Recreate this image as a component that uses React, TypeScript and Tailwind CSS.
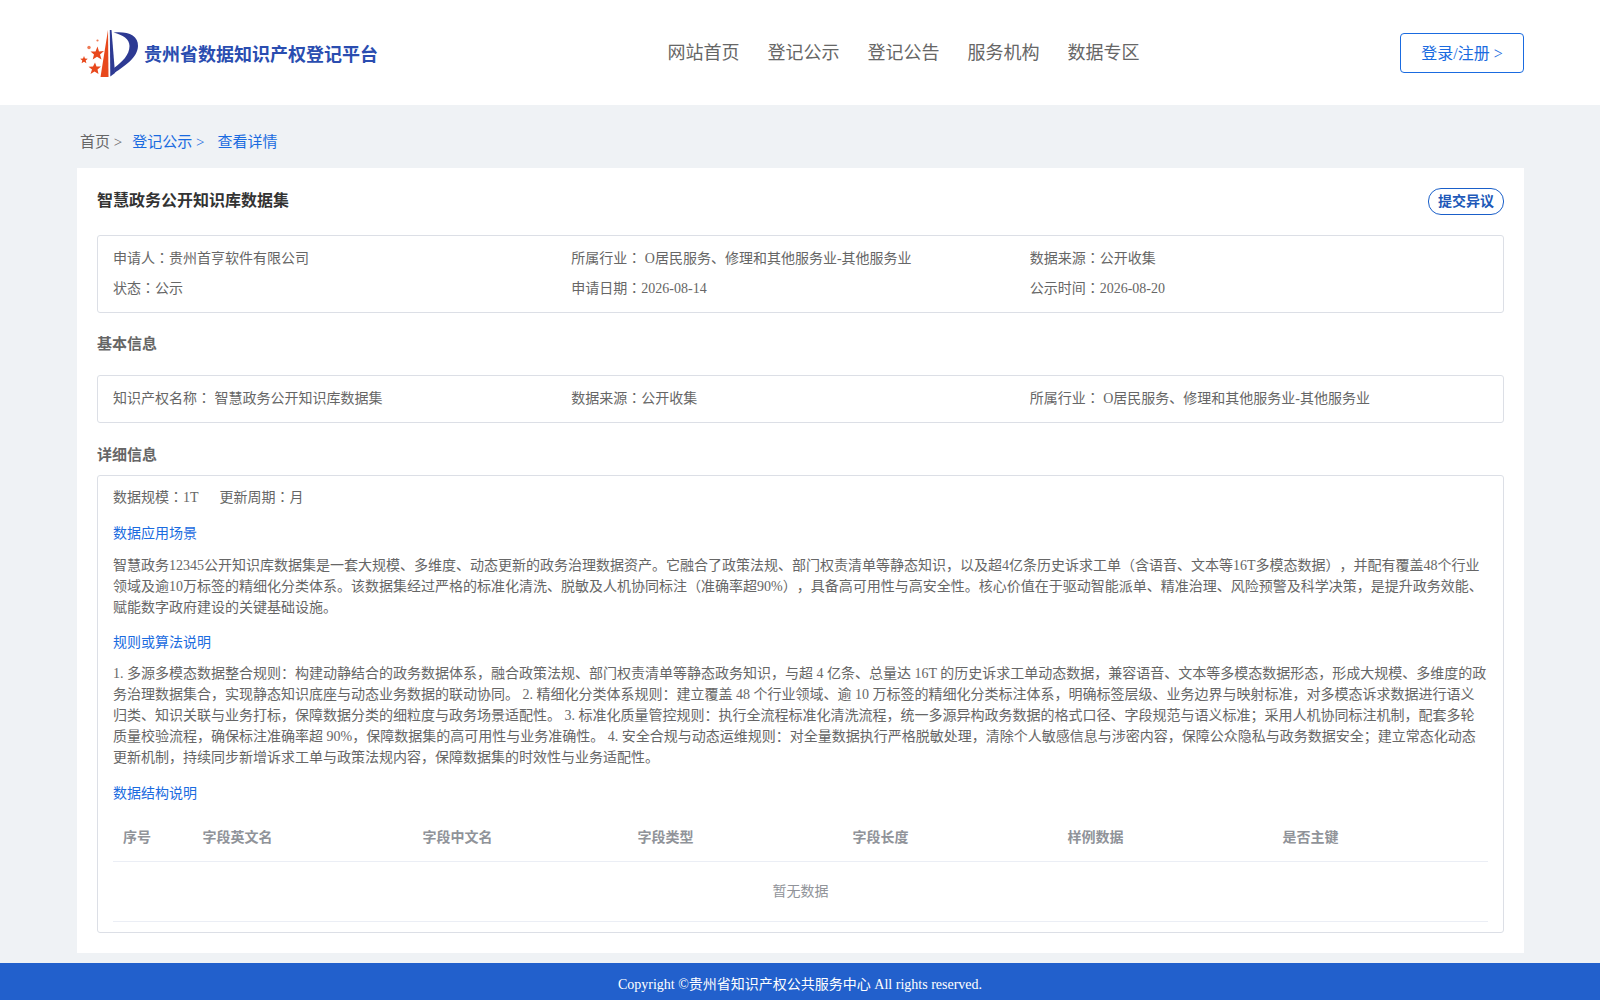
const F = "[font-family:'Liberation_Serif','Noto_Sans_CJK_SC',serif]";

function Logo() {
  return (
    <svg width="60" height="54" viewBox="0 0 60 54" className="shrink-0">
      <path d="M20.500 50 L28 3 L28.500 50 Z" fill="#e8481c" />
      <path d="M29.800 3 L31.500 3 L35 46 L30.300 49.500 Z" fill="#2d3a93" />
      <path d="M33.500 5.500 C47 4 58.500 8 58 19 C57.500 31 45 38.500 34.500 46 L34 41 C42 35 49.500 28 49.500 19 C49.500 12 43 8 33.500 5.500 Z" fill="#2d3a93" />
      <polygon points="17.500,19.500 19,24.500 24,24 20,27.500 21.500,32.500 17,29.800 12.700,32.500 14,27.500 10.500,24.500 15.500,24.500" fill="#e8481c" />
      <polygon points="15,35.500 16.500,39.500 21,39.500 17.500,42.500 18.500,47 14.500,44.500 10.500,47 12,42.500 8.500,39.800 13,39.500" fill="#e8481c" />
      <polygon points="4,29 5,31.500 7.800,31.800 5.700,33.500 6.400,36.300 4,34.800 1.600,36.300 2.300,33.500 0.200,31.800 3,31.500" fill="#e8481c" />
      <circle cx="9" cy="20.500" r="1.700" fill="#ee7a55" />
      <circle cx="17.500" cy="13.500" r="1.100" fill="#ee7a55" />
    </svg>
  );
}

// The colon sits centred in the reference, as in the TC cut of the font.
function T({ children }: { children: string }) {
  return (
    <>
      {children.split(/(：)/).map((part, i) =>
        i % 2 === 1 ? (
          <span key={i} className="leading-[0px] [font-family:'Noto_Sans_CJK_TC',serif]">{part}</span>
        ) : (
          part
        ),
      )}
    </>
  );
}

function Info({ children }: { children: string }) {
  return (
    <div className="flex-1 truncate">
      <T>{children}</T>
    </div>
  );
}

export default function App() {
  const cols = [
    ["序号", "w-[79.500px]"],
    ["字段英文名", "w-[220px]"],
    ["字段中文名", "w-[215px]"],
    ["字段类型", "w-[215px]"],
    ["字段长度", "w-[215px]"],
    ["样例数据", "w-[215px]"],
    ["是否主键", "flex-1"],
  ];
  return (
    <div className={`${F} min-h-[1000px] bg-[#eff2f5] text-[14px] leading-[21px] text-[#666] [text-spacing-trim:space-all]`}>
      <header className="flex h-[105px] items-center justify-between bg-white pl-[80px] pr-[76px]">
        <div className="flex w-[400px] items-center gap-[4px] pt-[3px]">
          <Logo />
          <span className="pt-[2px] text-[18px] font-bold text-[#2a4db0]">贵州省数据知识产权登记平台</span>
        </div>
        <nav className="ml-[-73px] flex gap-[28px] pt-[1px] text-[18px] text-[#666]">
          <span>网站首页</span>
          <span>登记公示</span>
          <span>登记公告</span>
          <span>服务机构</span>
          <span>数据专区</span>
        </nav>
        <button className="h-[40px] w-[124px] rounded-[4px] border border-[#1a6be0] pt-[2px] text-[16px] text-[#1a6be0]">
          登录/注册 &gt;
        </button>
      </header>

      <main className="pl-[77px] pr-[76px]">
        <div className="flex h-[63px] items-center pl-[3px] pt-[11px] text-[15px]">
          <span className="mr-[10px]">首页 &gt;</span>
          <span className="mr-[13px] text-[#1a6be0]">登记公示 &gt;</span>
          <span className="text-[#1a6be0]">查看详情</span>
        </div>

        <section className="h-[785px] bg-white px-[20px] pt-[20px]">
          <div className="flex items-start justify-between">
            <h1 className="pt-[1px] text-[16px] font-bold leading-[24px] text-[#333]">智慧政务公开知识库数据集</h1>
            <button className="h-[27px] w-[76px] rounded-[13px] border border-[#1a5fc9] text-[14px] font-bold text-[#2058b8]">
              提交异议
            </button>
          </div>

          <div className="mt-[20px] h-[78px] rounded-[3px] border border-[#dcdfe6] px-[15px] pt-[12px]">
            <div className="flex h-[21px]">
              <Info>申请人：贵州首亨软件有限公司</Info>
              <Info>所属行业： O居民服务、修理和其他服务业-其他服务业</Info>
              <Info>数据来源：公开收集</Info>
            </div>
            <div className="mt-[9px] flex h-[21px]">
              <Info>状态：公示</Info>
              <Info>申请日期：2026-08-14</Info>
              <Info>公示时间：2026-08-20</Info>
            </div>
          </div>

          <h2 className="mt-[20px] text-[15px] font-bold leading-[22px]">基本信息</h2>

          <div className="mt-[20px] flex h-[48px] items-center rounded-[3px] border border-[#dcdfe6] px-[15px] pb-[2px]">
            <Info>知识产权名称： 智慧政务公开知识库数据集</Info>
            <Info>数据来源：公开收集</Info>
            <Info>所属行业： O居民服务、修理和其他服务业-其他服务业</Info>
          </div>

          <h2 className="mt-[21px] text-[15px] font-bold leading-[22px]">详细信息</h2>

          <div className="mt-[9px] h-[458px] rounded-[3px] border border-[#dcdfe6] px-[15px] pt-[11px]">
            <div className="flex gap-[21px]">
              <span><T>数据规模：1T</T></span>
              <span><T>更新周期：月</T></span>
            </div>
            <div className="mt-[15px] text-[#1a6be0]">数据应用场景</div>
            <p className="mt-[11px]">
              智慧政务12345公开知识库数据集是一套大规模、多维度、动态更新的政务治理数据资产。它融合了政策法规、部门权责清单等静态知识，以及超4亿条历史诉求工单（含语音、文本等16T多模态数据），并配有覆盖48个行业领域及逾10万标签的精细化分类体系。该数据集经过严格的标准化清洗、脱敏及人机协同标注（准确率超90%），具备高可用性与高安全性。核心价值在于驱动智能派单、精准治理、风险预警及科学决策，是提升政务效能、赋能数字政府建设的关键基础设施。
            </p>
            <div className="mt-[14px] text-[#1a6be0]">规则或算法说明</div>
            <p className="mt-[10px]">
              1. 多源多模态数据整合规则：构建动静结合的政务数据体系，融合政策法规、部门权责清单等静态政务知识，与超 4 亿条、总量达 16T 的历史诉求工单动态数据，兼容语音、文本等多模态数据形态，形成大规模、多维度的政务治理数据集合，实现静态知识底座与动态业务数据的联动协同。 2. 精细化分类体系规则：建立覆盖 48 个行业领域、逾 10 万标签的精细化分类标注体系，明确标签层级、业务边界与映射标准，对多模态诉求数据进行语义归类、知识关联与业务打标，保障数据分类的细粒度与政务场景适配性。 3. 标准化质量管控规则：执行全流程标准化清洗流程，统一多源异构政务数据的格式口径、字段规范与语义标准；采用人机协同标注机制，配套多轮质量校验流程，确保标注准确率超 90%，保障数据集的高可用性与业务准确性。 4. 安全合规与动态运维规则：对全量数据执行严格脱敏处理，清除个人敏感信息与涉密内容，保障公众隐私与政务数据安全；建立常态化动态更新机制，持续同步新增诉求工单与政策法规内容，保障数据集的时效性与业务适配性。
            </p>
            <div className="mt-[15px] text-[#1a6be0]">数据结构说明</div>

            <div className="mt-[9px] flex h-[49px] items-center border-b border-[#ebeef5] pl-[10px] font-bold text-[#909399]">
              {cols.map(([label, width]) => (
                <div key={label} className={width}>{label}</div>
              ))}
            </div>
            <div className="flex h-[60px] items-center justify-center border-b border-[#ebeef5] text-[#909399]">
              暂无数据
            </div>
          </div>
        </section>
      </main>

      <footer className="mt-[10px] flex h-[37px] items-center justify-center bg-[#2260cc] pt-[5px] text-white">
        Copyright ©贵州省知识产权公共服务中心 All rights reserved.
      </footer>
    </div>
  );
}
